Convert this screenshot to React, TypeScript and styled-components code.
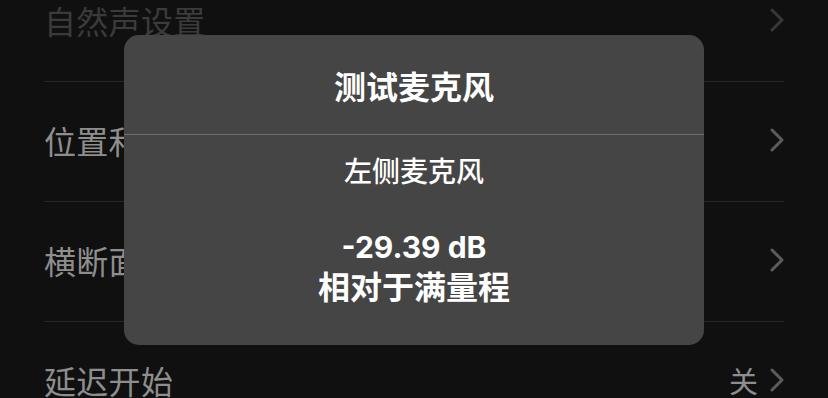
import styled, { createGlobalStyle } from "styled-components";

const GlobalStyle = createGlobalStyle`
  html, body {
    margin: 0;
    padding: 0;
    background: #101010;
    overflow: hidden;
  }
  body {
    font-family: Inter, "Noto Sans CJK SC", sans-serif;
    -webkit-font-smoothing: antialiased;
  }
`;

type Item = { label: string; value?: string; dim?: boolean };

const ITEMS: Item[] = [
  { label: "自然声设置", dim: true },
  { label: "位置和方向" },
  { label: "横断面设置" },
  { label: "延迟开始", value: "关" },
];

const App = () => {
  return (
    <>
      <GlobalStyle />
      <Screen>
        <List>
          {ITEMS.map((item) => (
            <Row key={item.label} $dim={item.dim}>
              <Label>{item.label}</Label>
              <Trailing>
                {item.value && <Value>{item.value}</Value>}
                <Chevron />
              </Trailing>
            </Row>
          ))}
        </List>
        <Overlay>
          <Dialog>
            <Header>
              <Title>测试麦克风</Title>
            </Header>
            <Body>
              <Channel>左侧麦克风</Channel>
              <Reading>
                <Level>-29.39 dB</Level>
                <Scale>相对于满量程</Scale>
              </Reading>
            </Body>
          </Dialog>
        </Overlay>
      </Screen>
    </>
  );
};

const Chevron = () => (
  <ChevronSvg viewBox="0 0 14 24" fill="none">
    <path
      d="M2 2 L12 12 L2 22"
      stroke="currentColor"
      strokeWidth="3"
      strokeLinecap="round"
      strokeLinejoin="round"
    />
  </ChevronSvg>
);

//*STYLES
const Screen = styled.div`
  position: relative;
  width: 828px;
  height: 398px;
  overflow: hidden;
`;

const List = styled.div`
  margin-top: -38px;
  padding: 0 44px;
  display: flex;
  flex-direction: column;
`;

const Row = styled.div<{ $dim?: boolean }>`
  box-sizing: border-box;
  height: 120px;
  padding-bottom: 3px;
  display: flex;
  align-items: center;
  justify-content: space-between;
  border-bottom: 1px solid #262626;
  color: ${(p) => (p.$dim ? "#3b3b3b" : "#8e8e8e")};
  --chev: ${(p) => (p.$dim ? "#383838" : "#5c5c5c")};
`;

const Label = styled.div`
  font-family: "Noto Sans CJK SC", sans-serif;
  font-size: 32px;
  letter-spacing: 0.3px;
`;

const Trailing = styled.div`
  display: flex;
  align-items: center;
  gap: 12px;
`;

const Value = styled.span`
  font-family: "Noto Sans CJK SC", sans-serif;
  font-size: 29px;
`;

const ChevronSvg = styled.svg`
  width: 14px;
  height: 24px;
  color: var(--chev);
`;

const Overlay = styled.div`
  position: absolute;
  inset: 0;
  display: flex;
  justify-content: center;
  align-items: flex-start;
  padding-top: 35px;
`;

const Dialog = styled.div`
  width: 580px;
  height: 310px;
  background: #454545;
  border-radius: 15px;
  display: flex;
  flex-direction: column;
  color: #ffffff;
`;

const Header = styled.div`
  height: 99px;
  display: flex;
  align-items: center;
  justify-content: center;
  border-bottom: 1px solid #6f6f6f;
`;

const Title = styled.div`
  font-family: "Noto Sans CJK SC", sans-serif;
  font-weight: 700;
  font-size: 32px;
`;

const Body = styled.div`
  display: flex;
  flex-direction: column;
  align-items: center;
  padding-top: 17px;
`;

const Channel = styled.div`
  font-family: "Noto Sans CJK SC", sans-serif;
  font-weight: 500;
  font-size: 28px;
  line-height: 36px;
`;

const Reading = styled.div`
  margin-top: 40px;
  display: flex;
  flex-direction: column;
  align-items: center;
  font-weight: 700;
  line-height: 38px;
`;

const Level = styled.span`
  font-size: 30px;
`;

const Scale = styled.span`
  font-family: "Noto Sans CJK SC", sans-serif;
  font-size: 32px;
`;

export default App;
